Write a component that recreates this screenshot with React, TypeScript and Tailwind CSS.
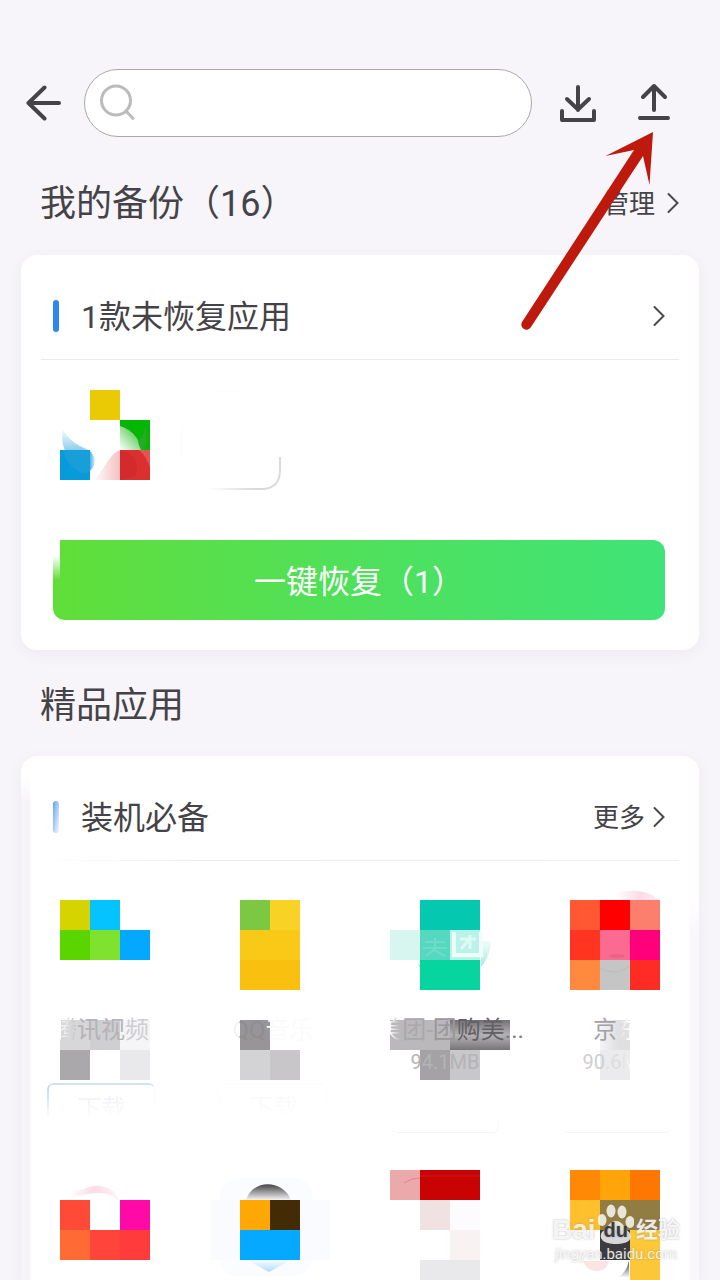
import type { ReactNode } from "react";

type Tile = [x: number, y: number, w: number, h: number, fill: string];

type App = {
  id: string;
  tiles: Tile[];
  art?: ReactNode;
  over?: ReactNode;
  name?: ReactNode;
  size?: ReactNode;
  veil?: Tile[];
  button?: string;
  label?: string;
};

function Tiles({ tiles }: { tiles: Tile[] }) {
  return (
    <>
      {tiles.map(([x, y, w, h, fill], i) => (
        <rect key={i} x={x} y={y} width={w} height={h} fill={fill} shapeRendering="crispEdges" />
      ))}
    </>
  );
}

function Chevron() {
  return (
    <svg width="14" height="22" viewBox="0 0 14 22" fill="none" stroke="#4a484c" strokeWidth="2" aria-hidden="true">
      <path d="M2.500 2 L11.500 11 L2.500 20" strokeLinecap="round" />
    </svg>
  );
}

const firstRow: App[] = [
  {
    id: "video",
    tiles: [
      [13, 15, 30, 30, "#d5d400"],
      [43, 15, 30, 30, "#05c3ff"],
      [13, 45, 30, 30, "#5bd500"],
      [43, 45, 30, 30, "#7fe22e"],
      [73, 45, 30, 30, "#05a8ff"],
    ],
    veil: [
      [13, 10, 30, 30, "#d7d6d8"],
      [43, 10, 30, 30, "#cfced0"],
      [73, 10, 30, 30, "#f5f4f6"],
      [13, 40, 30, 30, "#aaa8ab"],
      [73, 40, 30, 30, "#e9e8ea"],
    ],
    name: (
      <>
        <span className="bg-linear-to-r from-white from-30% to-[#c0bfc2] bg-clip-text text-transparent">腾</span>
        <span className="text-[#b4b3b6]">讯视</span>
        <span className="text-[#cfced1]">频</span>
      </>
    ),
    button:
      "border-t-2 border-l-2 border-r border-t-[#cfe2f0] border-l-[#b5d6ec] border-r-[#f9f9fb] [mask-image:linear-gradient(#000,transparent_70%)]",
    label: "text-[#e6e8f4]",
  },
  {
    id: "reader",
    tiles: [
      [21, 15, 30, 30, "#7cc843"],
      [51, 15, 30, 30, "#f8d326"],
      [21, 45, 60, 30, "#f9c917"],
      [21, 75, 60, 30, "#fac010"],
    ],
    veil: [
      [21, 10, 30, 30, "#979598"],
      [21, 40, 30, 30, "#d3d2d4"],
      [51, 40, 30, 30, "#c8c6c9"],
    ],
    name: (
      <>
        <span className="bg-linear-to-r from-[#f3f3f3] from-40% to-[#8f8d90] to-50% bg-clip-text text-transparent">Q</span>
        <span className="text-[#8f8d90]">Q</span>
        <span className="text-[#fbfbfb]">音乐</span>
      </>
    ),
    button: "border border-[#f8fafb] [mask-image:linear-gradient(#000,transparent_70%)]",
    label: "text-[#f4f4f9]",
  },
  {
    id: "meituan",
    art: <path d="M20 55 A40 40 0 0 0 100 56 L90 56 V82 H28Z" fill="url(#teal)" />,
    tiles: [
      [29, 15, 60, 30, "#05c8b0"],
      [-1, 45, 30, 30, "#d8f6f0"],
      [29, 45, 30, 30, "#55d8bf"],
      [59, 45, 30, 30, "#b9f2e6"],
      [29, 75, 60, 30, "#07d59f"],
    ],
    over: (
      <>
        <path d="M34 57 h20 M32 63 h24 M44 53 v12 M35 71 L43 65 L54 71" fill="none" stroke="#6fdcc8" strokeWidth="2" />
        <path d="M63 47 V70 H90 V47" fill="none" stroke="#effcf9" strokeWidth="4" />
        <path d="M69 54 H85 M79 50 V64 M78 55 L70 64" fill="none" stroke="#dff9f4" strokeWidth="3" />
      </>
    ),
    veil: [
      [-1, 10, 60, 30, "#bab8bb"],
      [59, 10, 60, 30, "url(#name-gray)"],
      [29, 40, 30, 30, "#a4a2a5"],
      [59, 40, 30, 30, "#c8c7c9"],
    ],
    name: (
      <span className="pl-3">
        <span className="bg-linear-to-r from-white from-50% to-[#aeacaf] bg-clip-text text-transparent">美</span>
        <span className="text-[#aaa8ab]">团-</span>
        <span className="text-[#99979a]">团</span>
        <span className="text-[#626063]">购美</span>
        <span className="text-[#7d7b7e]">...</span>
      </span>
    ),
    size: <span className="text-[#b5b3b6]">94.1MB</span>,
    button: "border-b border-r border-[#f5f5f6] [mask-image:linear-gradient(transparent_60%,#000)]",
  },
  {
    id: "jd",
    art: <path d="M52 8 C72 3 95 6 103 25 L97 15 H60Z" fill="url(#pink-arc)" />,
    tiles: [
      [7, 15, 30, 30, "#ff5833"],
      [37, 15, 30, 30, "#ff0000"],
      [67, 15, 30, 30, "#fb7f6c"],
      [7, 45, 30, 30, "#ff3522"],
      [37, 45, 30, 30, "#fb6b91"],
      [67, 45, 30, 30, "#ff007a"],
      [7, 75, 30, 30, "#ff893f"],
      [37, 75, 30, 30, "#c5c5c6"],
      [67, 75, 30, 30, "#ff2c26"],
    ],
    over: (
      <>
        <ellipse cx="54" cy="71" rx="8" ry="2" fill="#ee6286" />
        <path d="M37 83 Q52 92 67 81" fill="none" stroke="#bcbcbd" strokeWidth="1" />
      </>
    ),
    veil: [
      [37, 10, 30, 30, "url(#soft-gray)"],
      [37, 40, 30, 30, "#ebeaec"],
    ],
    name: (
      <>
        <span className="text-[#a3a1a4]">京</span>
        <span className="bg-linear-to-r from-[#d6d5d7] to-white to-50% bg-clip-text text-transparent">东</span>
      </>
    ),
    size: (
      <>
        <span className="text-[#cfced0]">90</span>
        <span className="text-[#dddcde]">.6</span>
        <span className="bg-linear-to-r from-[#dddcde] to-white to-30% bg-clip-text text-transparent">MB</span>
      </>
    ),
    button: "border-b border-[#f5f5f5]",
  },
];

const secondRow: App[] = [
  {
    id: "red",
    art: <path d="M22 25 C35 29 43 17 58 22 C68 25 71 31 71 36 C60 23 40 29 24 33Z" fill="url(#pink-arc)" />,
    tiles: [
      [13, 35, 30, 30, "#ff4a38"],
      [73, 35, 30, 30, "#ff09a7"],
      [13, 65, 30, 30, "#ff6a35"],
      [43, 65, 30, 30, "#ff453b"],
      [73, 65, 30, 30, "#ff3b3c"],
    ],
  },
  {
    id: "penguin",
    art: (
      <>
        <rect x="1" y="13" width="92" height="98" rx="18" fill="#fbfcff" />
        <rect x="-8" y="35" width="119" height="60" fill="#fafbff" />
        <path d="M27 35 C33 14 64 14 72 35Z" fill="url(#dome)" />
        <path d="M28 95 H72 L50 107Z" fill="url(#blue-tip)" />
      </>
    ),
    tiles: [
      [21, 35, 30, 30, "#ffa805"],
      [51, 35, 30, 30, "#432b05"],
      [21, 65, 60, 30, "#05a9ff"],
    ],
  },
  {
    id: "darkred",
    tiles: [
      [-1, 5, 30, 30, "#eca9aa"],
      [29, 5, 60, 30, "#c90204"],
      [29, 35, 30, 30, "#f0e1e3"],
      [59, 35, 30, 30, "#fefbfe"],
      [59, 65, 30, 30, "#f8f2f3"],
      [29, 95, 60, 20, "#e9e8ea"],
    ],
    over: <path d="M13 18 Q20 13 29 13 M29 11 H89" fill="none" stroke="#d4494c" strokeWidth="1" opacity=".4" />,
  },
  {
    id: "orange",
    tiles: [
      [7, 5, 30, 30, "#ff8805"],
      [37, 5, 30, 30, "#ffa50a"],
      [67, 5, 30, 30, "#ff7703"],
      [7, 35, 30, 30, "#ffc02e"],
      [37, 35, 30, 30, "#917c42"],
      [67, 35, 30, 30, "#917c42"],
      [37, 65, 30, 30, "#3c3b40"],
      [67, 65, 30, 50, "#fcc839"],
    ],
    over: (
      <>
        <path d="M20 96 H46 Q44 106 33 106 Q23 105 20 96Z" fill="#fae2e5" />
        <path d="M56 112 Q64 106 66 96 V112Z" fill="url(#dome)" />
      </>
    ),
  },
];

function AppIcon({ app, className }: { app: App; className: string }) {
  return (
    <svg className={className} aria-hidden="true">
      {app.art}
      <Tiles tiles={app.tiles} />
      {app.over}
    </svg>
  );
}

function CardHeader({ title, bar, action }: { title: string; bar: string; action?: string }) {
  return (
    <div className="flex h-[104px] items-center pt-[18px] pr-[33px] pl-8">
      <span className={`h-8 w-[6px] rounded-full ${bar}`} />
      <h2 className="ml-[22px] flex-1 pt-[2px] text-[32px] leading-10">{title}</h2>
      <a href="#more" aria-label={action ?? title} className="flex items-center gap-[7px] text-[26px] leading-8">
        {action && <span className="pt-[2px]">{action}</span>}
        <Chevron />
      </a>
    </div>
  );
}

function Gradients() {
  return (
    <svg width="0" height="0" className="absolute" aria-hidden="true">
      <defs>
        <linearGradient id="teal" x1="0" x2="0" y1="0" y2="1">
          <stop offset="0" stopColor="#b9f2e6" stopOpacity=".2" />
          <stop offset="1" stopColor="#55ddba" />
        </linearGradient>
        <linearGradient id="name-gray" x1="0" x2="0" y1="0" y2="1">
          <stop offset="0" stopColor="#737174" />
          <stop offset=".5" stopColor="#b5b3b6" />
          <stop offset="1" stopColor="#777578" />
        </linearGradient>
        <linearGradient id="soft-gray">
          <stop offset="0" stopColor="#f4f3f5" />
          <stop offset=".6" stopColor="#e0dfe1" />
        </linearGradient>
        <linearGradient id="pink-arc">
          <stop offset="0" stopColor="#fff" />
          <stop offset=".5" stopColor="#fbdbe6" />
          <stop offset="1" stopColor="#fef3f7" />
        </linearGradient>
        <linearGradient id="dome" x1="0" x2="0" y1="0" y2="1">
          <stop offset="0" stopColor="#444" />
          <stop offset="1" stopColor="#f4f4f8" />
        </linearGradient>
        <linearGradient id="blue-tip" x1="0" x2="0" y1="0" y2="1">
          <stop offset="0" stopColor="#fafcff" />
          <stop offset="1" stopColor="#aedcf8" />
        </linearGradient>
        <linearGradient id="swirl-blue" x1="0" x2="0" y1="0" y2="1">
          <stop offset="0" stopColor="#fff" />
          <stop offset="1" stopColor="#189fda" />
        </linearGradient>
        <linearGradient id="swirl-tail">
          <stop offset="0" stopColor="#4bb5e2" />
          <stop offset="1" stopColor="#d9f0fa" />
        </linearGradient>
        <linearGradient id="swirl-green" x1="0" x2="1" y1="1" y2="0">
          <stop offset="0" stopColor="#fff" />
          <stop offset="1" stopColor="#2dbd29" />
        </linearGradient>
        <linearGradient id="swirl-red" x1="0" x2="1" y1="0" y2="0">
          <stop offset="0" stopColor="#fff" />
          <stop offset="1" stopColor="#f3b9b9" />
        </linearGradient>
        <linearGradient id="corner" gradientUnits="userSpaceOnUse" x1="155" x2="227" y1="129" y2="115">
          <stop offset="0" stopColor="#fff" />
          <stop offset=".6" stopColor="#dadada" />
          <stop offset="1" stopColor="#dadada" />
        </linearGradient>
      </defs>
    </svg>
  );
}

export default function App() {
  return (
    <div className="relative flex min-h-screen flex-col overflow-hidden bg-[#f7f5fa] font-['Roboto','Noto_Sans_CJK_SC',sans-serif] text-[#454347]">
      <Gradients />

      <header className="flex items-center pt-[69px] pr-[49px] pl-[26px]">
        <button type="button" aria-label="返回">
          <svg width="36" height="36" viewBox="0 0 36 36" fill="none" stroke="#454347" strokeWidth="4" strokeLinecap="round" strokeLinejoin="round">
            <path d="M18.500 2.500 L2.500 18 L18.500 33.500 M3 18 H33" />
          </svg>
        </button>
        <label className="ml-[22px] flex h-[68px] flex-1 items-center rounded-full border border-[#aaa8ac] bg-white pl-[14px]">
          <svg width="38" height="38" viewBox="0 0 38 38" fill="none" stroke="#bbbbbb" strokeWidth="3" strokeLinecap="round" aria-hidden="true">
            <circle cx="17" cy="16.500" r="14.500" />
            <path d="M27 27 L34 34.500" />
          </svg>
          <input type="search" aria-label="搜索" className="h-full min-w-0 flex-1 bg-transparent px-3 text-[26px] outline-none" />
        </label>
        <button type="button" aria-label="下载" className="ml-7">
          <svg width="36" height="40" viewBox="0 0 36 40" fill="none" stroke="#454347" strokeWidth="4" strokeLinecap="round">
            <path d="M18 4 V27 M7 16 L18 26.500 L29 16" strokeLinejoin="round" />
            <path d="M2 28 V37 H34 V28" strokeLinejoin="round" />
          </svg>
        </button>
        <button type="button" aria-label="上传" className="ml-[41px]">
          <svg width="34" height="40" viewBox="0 0 34 40" fill="none" stroke="#454347" strokeWidth="4" strokeLinecap="round" strokeLinejoin="round">
            <path d="M17 27 V3 M6 14 L17 3 L28 14 M3 35 H31" />
          </svg>
        </button>
      </header>

      <div className="flex h-[118px] items-center justify-between pt-[13px] pr-10 pl-10">
        <h1 className="pt-[3px] text-[36px] leading-[44px]">我的备份（16）</h1>
        <a href="#manage" className="flex items-center gap-[11px] text-[26px] leading-8">
          <span className="pt-[2px]">管理</span>
          <Chevron />
        </a>
      </div>

      <section className="mx-[21px] rounded-2xl bg-white pb-[30px] shadow-[0_4px_16px_rgba(90,80,110,0.06)]">
        <CardHeader title="1款未恢复应用" bar="bg-[#2f87ee]" />
        <div className="mx-5 h-px bg-[#ebeaed]" />
        <svg className="ml-8 block h-[180px] w-[240px]" viewBox="0 0 240 180" aria-hidden="true">
          <path d="M10 68 C15 82 28 86 37 91 V112 C16 108 6 86 10 68Z" fill="url(#swirl-blue)" />
          <path d="M37 91 C43 97 44 104 37 111Z" fill="url(#swirl-tail)" />
          <path d="M40 120 C52 112 56 90 70 90 V120Z" fill="url(#swirl-red)" />
          <Tiles
            tiles={[
              [37, 30, 30, 30, "#e9ca05"],
              [67, 60, 30, 30, "#05b705"],
              [7, 90, 30, 30, "#079bdc"],
              [67, 90, 30, 30, "#dc2f30"],
            ]}
          />
          <path d="M67 66 C80 70 87 80 88 90 H67Z" fill="url(#swirl-green)" />
          <path d="M92 64 Q96 82 90 92 Q86 88 85 81 Q92 77 92 64Z" fill="#28aa27" />
          <path d="M10 90 H37 V111 Q31 115 25 111 Q12 102 10 90Z" fill="#189fda" />
          <path d="M67 91 A17 17 0 0 1 82 116 L67 120Z" fill="#d22a2d" />
          <path d="M86 90 H97 V108 Q94 97 86 90Z" fill="#ed7776" opacity=".5" />
          <path d="M155 129 H208 Q227 129 227 110 V97" fill="none" stroke="url(#corner)" strokeWidth="2" />
          <path d="M129 65 V96 M160 31 H190" stroke="#fbfbfb" />
        </svg>
        <button
          type="button"
          className="relative ml-8 block h-20 w-[calc(100%-66px)] overflow-hidden rounded-xl rounded-tl-none bg-linear-to-r from-[#60de38] via-[#4fe05b] to-[#3fe477] text-[32px] leading-10 text-white"
        >
          <span className="absolute top-0 left-0 h-10 w-[7px] bg-linear-to-b from-white from-40% to-transparent" />
          <span className="block pt-[3px]">一键恢复（1）</span>
        </button>
      </section>

      <h1 className="flex h-[106px] items-center px-10 pt-[5px] text-[36px] leading-[44px]">精品应用</h1>

      <section className="relative mx-[21px] flex-1 rounded-t-2xl bg-white shadow-[0_4px_16px_rgba(90,80,110,0.06)]">
        <span className="absolute top-5 bottom-0 left-0 w-[9px] bg-linear-to-b from-transparent to-[#f6f4f9] to-5%" />
        <span className="absolute top-[140px] right-0 bottom-0 w-[9px] bg-linear-to-b from-transparent to-[#f8f7fb] to-10%" />
        <CardHeader title="装机必备" bar="bg-linear-to-br from-[#5fa2ee] to-[#f8fbff]" action="更多" />
        <div className="mx-5 h-px bg-linear-to-r from-white via-[#ebeaed] via-25% to-[#efeef1]" />
        <div className="grid grid-cols-4 gap-x-16 pr-7 pl-[26px]">
          {firstRow.map((app) => (
            <article key={app.id} className="min-w-0 pt-6">
              <AppIcon app={app} className="block h-[125px] w-full overflow-visible" />
              <div className="relative h-[73px]">
                <svg className="absolute inset-0 h-full w-full overflow-visible" aria-hidden="true">
                  <Tiles tiles={app.veil ?? []} />
                </svg>
                <div className="relative flex h-9 items-center justify-center pt-1 text-[24px] leading-8 whitespace-nowrap">{app.name}</div>
                <div className="relative flex h-8 items-center justify-center text-[20px] leading-6">{app.size}</div>
              </div>
              <button type="button" aria-label="下载" className={`block h-[50px] w-full rounded-md text-[24px] leading-8 ${app.button}`}>
                {app.label && <span className={app.label}>下载</span>}
              </button>
            </article>
          ))}
          {secondRow.map((app) => (
            <AppIcon key={app.id} app={app} className="mt-8 block h-[114px] w-full overflow-visible" />
          ))}
        </div>
      </section>

      <svg className="pointer-events-none absolute top-[128px] right-[64px]" width="136" height="204" viewBox="520 128 136 204" aria-hidden="true">
        <path d="M653 132 L649.500 185 L643 156 L531 327 A5 5 0 0 1 522 322 L634 150 L605.500 156Z" fill="#bd190c" />
      </svg>

      <div className="pointer-events-none absolute right-[40px] bottom-[16px] flex w-[128px] flex-col items-center text-white/85 [text-shadow:0_0_2px_rgba(100,100,100,0.5)]">
        <div className="flex h-11 w-full items-end justify-between text-[22px] leading-7 font-bold">
          <span className="font-['Liberation_Sans',sans-serif] text-[28px]">Bai</span>
          <span className="relative flex h-11 w-9 items-end justify-center">
            <svg className="absolute inset-0" width="36" height="44" viewBox="0 0 36 44" fill="#fff" fillOpacity=".8" aria-hidden="true">
              <ellipse cx="4" cy="20" rx="4.500" ry="6" />
              <ellipse cx="13" cy="11" rx="4.500" ry="6.500" />
              <ellipse cx="24" cy="12" rx="4.500" ry="6.500" />
              <ellipse cx="32" cy="22" rx="4.500" ry="6" />
              <path d="M18 21 C25 21 26 28 31 32 C36 39 30 44 18 44 C6 44 0 39 4 32 C10 28 11 21 18 21Z" />
            </svg>
            <span className="relative font-['Liberation_Sans',sans-serif] text-[20px] text-[#3c3b40]">du</span>
          </span>
          <span>经验</span>
        </div>
        <span className="text-[15px] leading-5">jingyan.baidu.com</span>
      </div>
    </div>
  );
}
